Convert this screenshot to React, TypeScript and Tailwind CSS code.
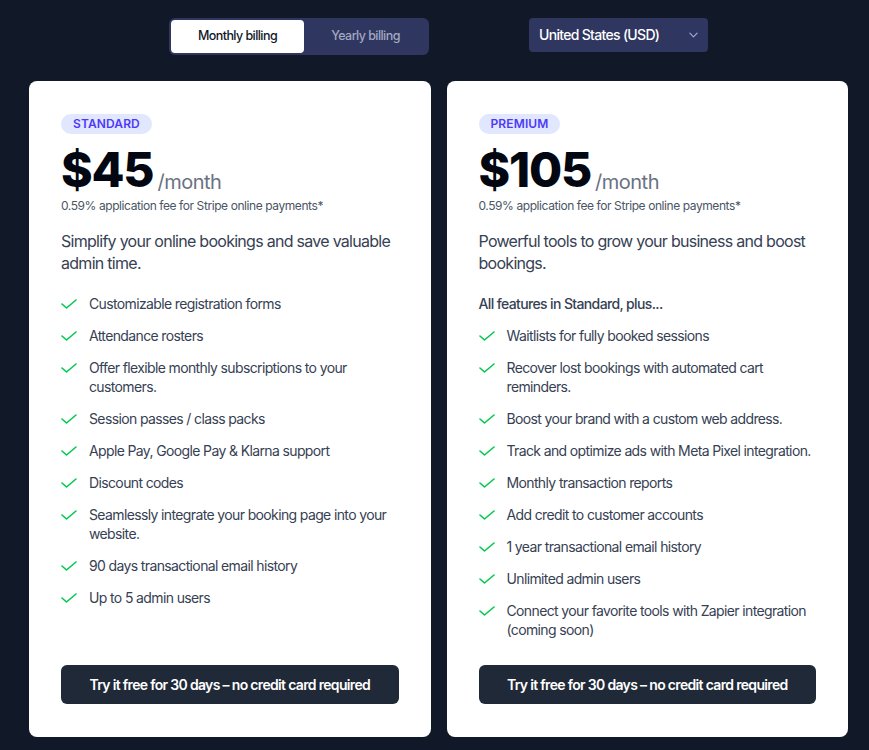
const standardFeatures = [
  'Customizable registration forms',
  'Attendance rosters',
  'Offer flexible monthly subscriptions to your customers.',
  'Session passes / class packs',
  'Apple Pay, Google Pay & Klarna support',
  'Discount codes',
  'Seamlessly integrate your booking page into your website.',
  '90 days transactional email history',
  'Up to 5 admin users',
];

const premiumFeatures = [
  'Waitlists for fully booked sessions',
  'Recover lost bookings with automated cart reminders.',
  'Boost your brand with a custom web address.',
  'Track and optimize ads with Meta Pixel integration.',
  'Monthly transaction reports',
  'Add credit to customer accounts',
  '1 year transactional email history',
  'Unlimited admin users',
  'Connect your favorite tools with Zapier integration (coming soon)',
];

type Plan = {
  name: string;
  price: string;
  description: string;
  intro?: string;
  features: string[];
};

const plans: Plan[] = [
  {
    name: 'Standard',
    price: '$45',
    description: 'Simplify your online bookings and save valuable admin time.',
    features: standardFeatures,
  },
  {
    name: 'Premium',
    price: '$105',
    description: 'Powerful tools to grow your business and boost bookings.',
    intro: 'All features in Standard, plus...',
    features: premiumFeatures,
  },
];

function CheckMark() {
  return (
    <svg viewBox="0 0 16 10" className="w-4 h-[10px] mt-[5px] shrink-0 text-green-500" fill="none">
      <path d="M1 5l4.5 4L15 1" stroke="currentColor" strokeWidth="1.6" strokeLinecap="round" strokeLinejoin="round" />
    </svg>
  );
}

function PlanCard({ plan }: { plan: Plan }) {
  return (
    <div className="bg-white rounded-lg px-8 pt-[33px] pb-[33px] flex flex-col">
      <div className="flex">
        <span className="inline-flex items-center h-5 px-3 rounded-full bg-indigo-100 text-indigo-600 text-xs font-semibold uppercase tracking-[0.01em]">
          {plan.name}
        </span>
      </div>

      <div className="mt-3 flex items-end gap-1">
        <span className="text-5xl font-extrabold tracking-tight text-gray-950 leading-none">{plan.price}</span>
        <span className="text-xl text-gray-500 leading-none mb-0.5 tracking-[-0.025em]">/month</span>
      </div>
      <p className="mt-1 text-xs leading-4 text-gray-600 tracking-[-0.035em]">
        0.59% application fee for Stripe online payments*
      </p>

      <p className="mt-4 text-base leading-[22px] text-gray-700 tracking-[-0.045em]">{plan.description}</p>

      {plan.intro && (
        <p className="mt-5 text-sm font-medium text-gray-700 leading-[19px] tracking-[-0.045em]">{plan.intro}</p>
      )}

      <ul className={`${plan.intro ? 'mt-[13px]' : 'mt-5'} flex flex-col gap-[13px]`}>
        {plan.features.map((f) => (
          <li key={f} className="flex gap-3 text-sm leading-[19px] text-gray-700 tracking-[-0.045em]">
            <CheckMark />
            <span>{f}</span>
          </li>
        ))}
      </ul>

      <div className="flex-1 min-h-[26px]" />

      <button className="w-full h-[39px] rounded-md bg-[#1f2937] text-white text-sm font-semibold tracking-[-0.048em]">
        Try it free for 30 days – no credit card required
      </button>
    </div>
  );
}

export default function App() {
  return (
    <div className="min-h-screen bg-[#111827] font-['Inter',sans-serif] pt-[18px] pb-4 pl-[29px] pr-[21px]">
      <div className="flex justify-center items-start gap-[100px]">
        <div className="flex p-0.5 rounded-md bg-[#2f365f]">
          <button className="w-[133px] h-[33px] rounded bg-white text-[12.5px] font-medium text-gray-900 tracking-[-0.045em]">
            Monthly billing
          </button>
          <button className="w-[123px] h-[33px] rounded text-[12.5px] font-medium text-[#a3a8c3] tracking-[-0.045em]">
            Yearly billing
          </button>
        </div>
        <div className="w-[179px] h-[34px] rounded bg-[#2f365f] flex items-center justify-between pl-[10px] pr-[10px]">
          <span className="text-sm font-medium text-white tracking-[-0.049em]">United States (USD)</span>
          <svg viewBox="0 0 10 6" className="w-[9px] h-[6px] text-[#a3a9dd]" fill="none">
            <path d="M1 1l4 4 4-4" stroke="currentColor" strokeWidth="1.3" strokeLinecap="round" strokeLinejoin="round" />
          </svg>
        </div>
      </div>

      <div className="mt-[26px] grid grid-cols-2 gap-4">
        {plans.map((p) => (
          <PlanCard key={p.name} plan={p} />
        ))}
      </div>
    </div>
  );
}
